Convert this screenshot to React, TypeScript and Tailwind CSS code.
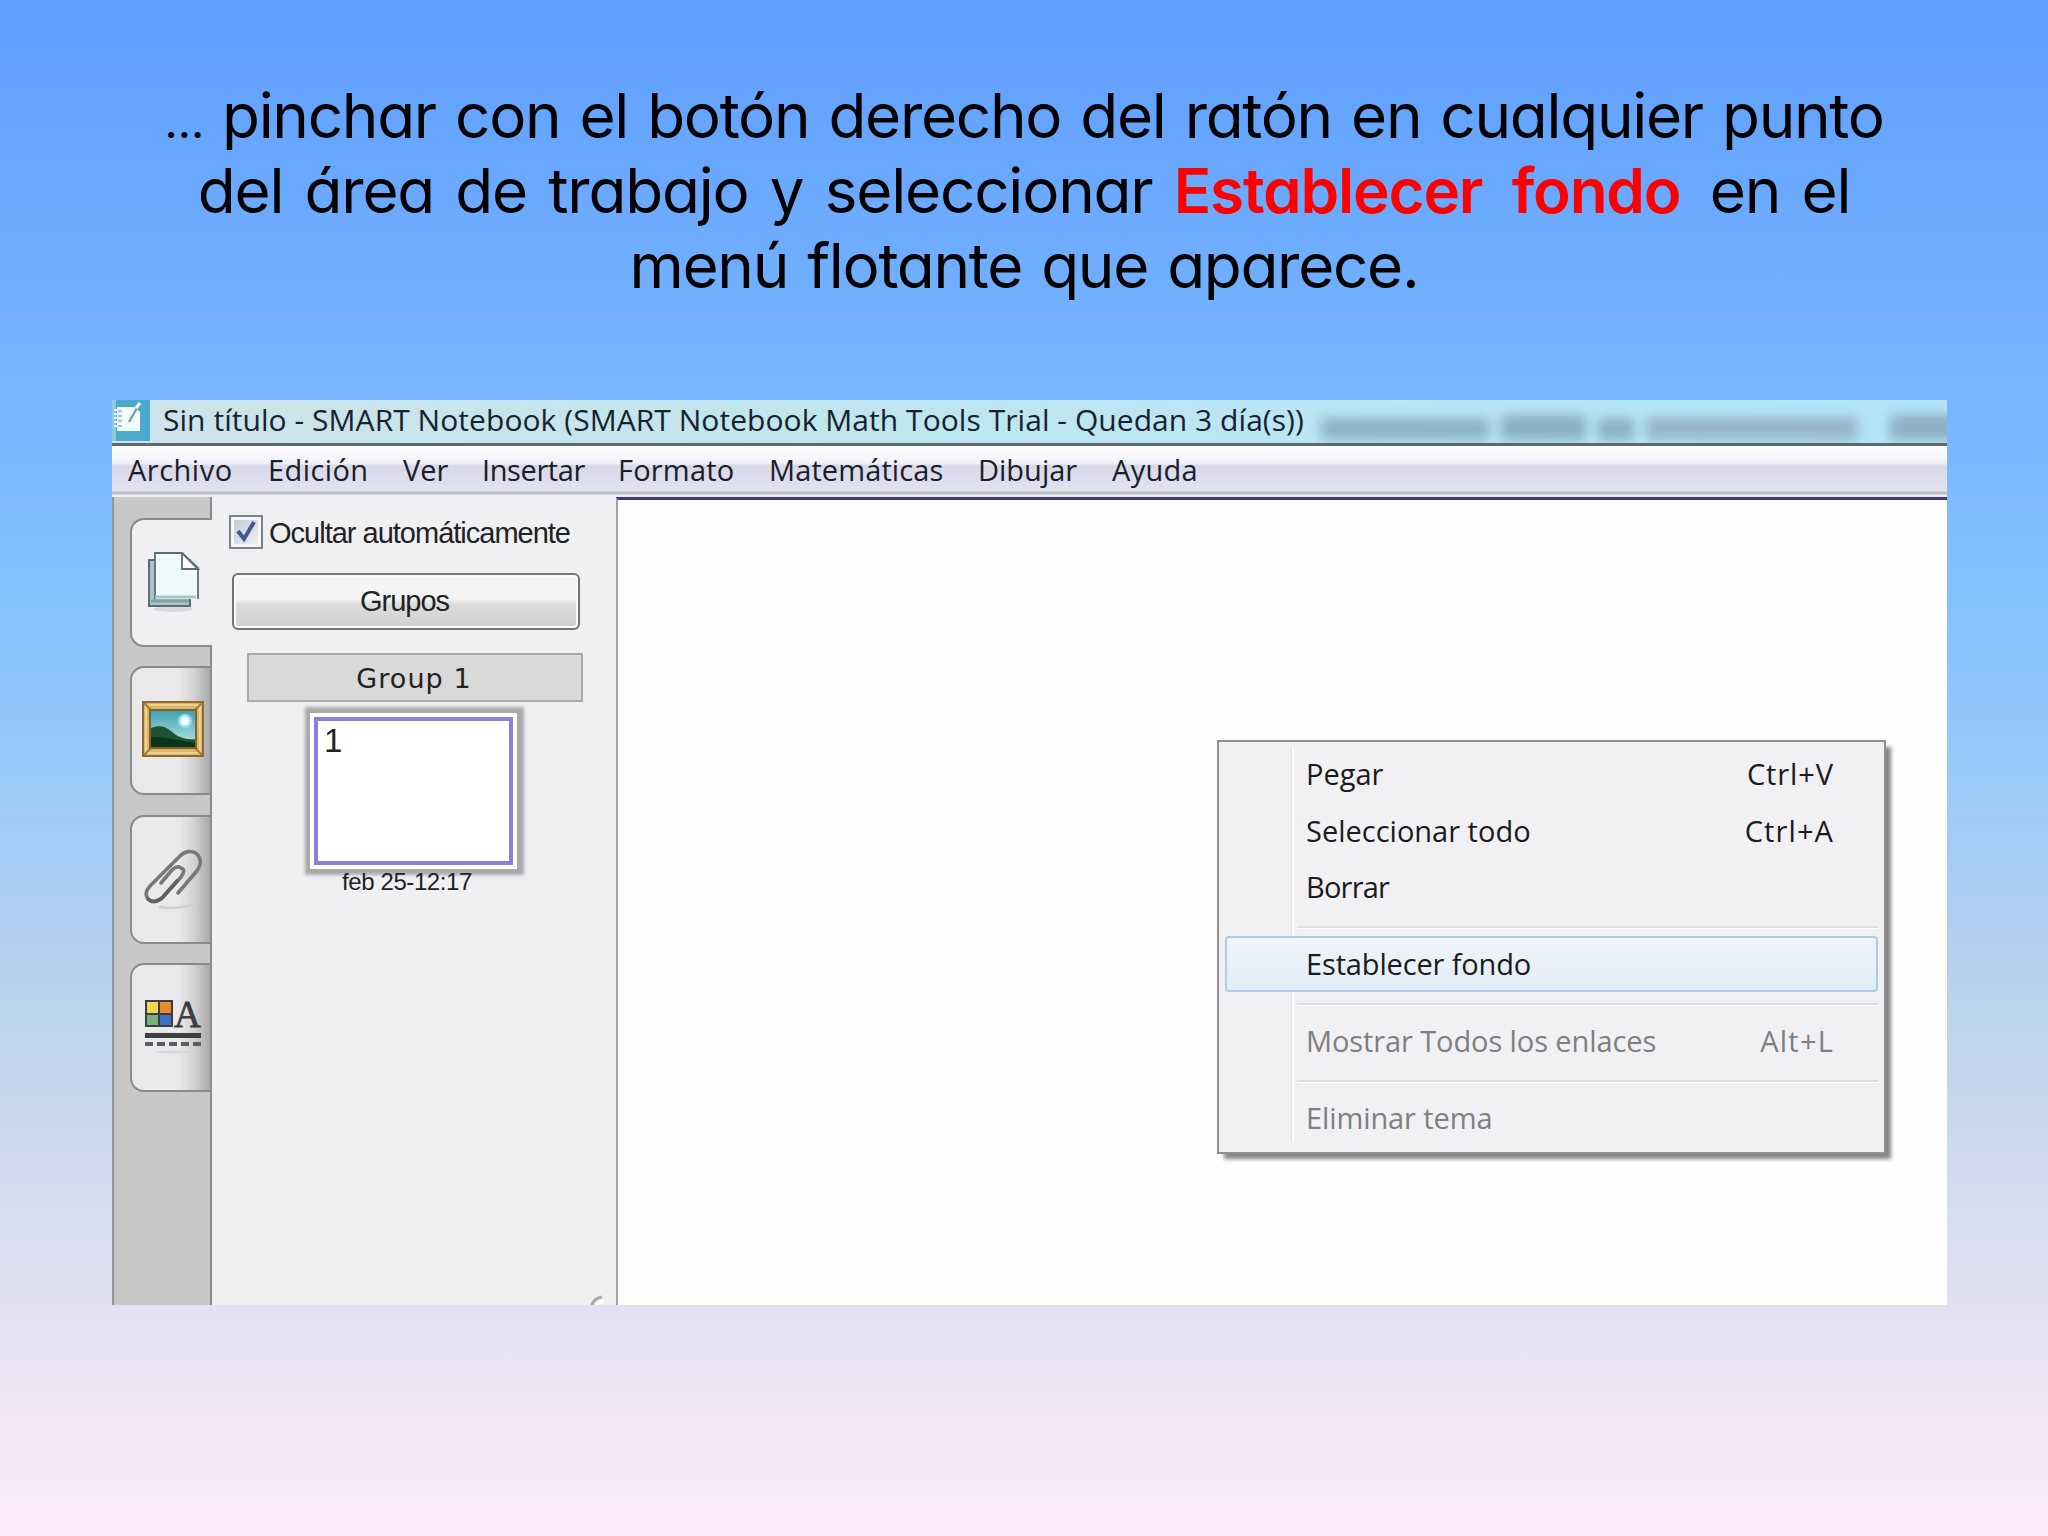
import clsx from 'clsx';

interface MenuEntry {
  label: string;
  shortcut?: string;
  disabled?: boolean;
  active?: boolean;
  tracking: string;
  shortcutTracking?: string;
}

const menuBar = [
  { label: 'Archivo', className: 'w-[140px] tracking-[0.5px]' },
  { label: 'Edición', className: 'w-[135px] tracking-[0.4px]' },
  { label: 'Ver', className: 'w-[79px]' },
  { label: 'Insertar', className: 'w-[136px] tracking-[-0.4px]' },
  { label: 'Formato', className: 'w-[151px] tracking-[0.2px]' },
  { label: 'Matemáticas', className: 'w-[209px] tracking-[0.1px]' },
  { label: 'Dibujar', className: 'w-[134px]' },
  { label: 'Ayuda', className: 'w-[120px] tracking-[0.3px]' },
];

const contextMenu: MenuEntry[][] = [
  [
    { label: 'Pegar', shortcut: 'Ctrl+V', tracking: 'tracking-[0px]', shortcutTracking: 'tracking-[0.9px]' },
    { label: 'Seleccionar todo', shortcut: 'Ctrl+A', tracking: 'tracking-[0px]', shortcutTracking: 'tracking-[1.1px]' },
    { label: 'Borrar', tracking: 'tracking-[-0.8px]' },
  ],
  [{ label: 'Establecer fondo', active: true, tracking: 'tracking-[-0.15px]' }],
  [
    {
      label: 'Mostrar Todos los enlaces',
      shortcut: 'Alt+L',
      disabled: true,
      tracking: 'tracking-[-0.1px]',
      shortcutTracking: 'tracking-[1.2px]',
    },
  ],
  [{ label: 'Eliminar tema', disabled: true, tracking: 'tracking-[-0.1px]' }],
];

function NotebookIcon() {
  return (
    <svg viewBox="0 0 38 41" className="h-[41px] w-[38px] shrink-0">
      <rect width="38" height="41" fill="#4ba9cb" />
      <rect x="0" width="4" height="41" fill="#8ccbdd" />
      <path d="M5 7h18l5 5v19H5z" fill="#f1f9fb" />
      <path d="M2 10h6M2 14h6M2 18h6M2 22h6M2 26h6" stroke="#e6f4f8" strokeWidth="2" />
      <path d="M6 11h4M6 16h4M6 21h4M6 26h4" stroke="#86b4c4" strokeWidth="1.4" />
      <path d="M17 22 25 8" stroke="#7e9aa3" strokeWidth="2.4" />
      <path d="m24 8 4-5" stroke="#ffffff" strokeWidth="3" />
    </svg>
  );
}

function PagesIcon() {
  return (
    <svg viewBox="0 0 54 62" className="h-[62px] w-[54px]">
      <ellipse cx="26" cy="57" rx="20" ry="3" fill="#d9dadb" />
      <path d="M2 8h41v46H2z" fill="#a9c3c8" stroke="#5d6e72" strokeWidth="2" />
      <path d="M4 49h38" stroke="#83a0a4" strokeWidth="3" />
      <path d="M8 1h27l16 15v31H8z" fill="#edfafc" />
      <path d="M8 47V1h27l16 15v31" fill="none" stroke="#626b6e" strokeWidth="1.8" />
      <path d="M8 45h41" stroke="#a7c6ca" strokeWidth="3" />
      <path d="M35 1v16h16z" fill="#fafcfc" stroke="#626b6e" strokeWidth="1.8" />
    </svg>
  );
}

function PictureIcon() {
  return (
    <svg viewBox="0 0 62 56" className="h-[56px] w-[62px]">
      <defs>
        <linearGradient id="sky" x1="0" y1="0" x2="0" y2="1">
          <stop offset="0" stopColor="#3fa0b6" />
          <stop offset="1" stopColor="#bfe9dd" />
        </linearGradient>
      </defs>
      <rect x="1" y="1" width="60" height="54" fill="#dcb566" stroke="#8c6a33" strokeWidth="2" />
      <rect x="4" y="4" width="54" height="48" fill="none" stroke="#ecd191" strokeWidth="2" />
      <path d="m2 2 8 8M60 2l-8 8M2 54l8-8M60 54l-8-8" stroke="#a37c3b" strokeWidth="2" />
      <rect x="8" y="9" width="46" height="38" fill="url(#sky)" stroke="#7c6330" strokeWidth="2" />
      <circle cx="43" cy="20" r="7" fill="#9ddcf0" />
      <circle cx="43" cy="20" r="4.5" fill="#f4fdff" />
      <path d="M9 27c8-3 14-2 20 3 6 6 15 9 24 8v8H9z" fill="#1d5232" />
      <path d="M9 36c12 0 26 3 44 6v4H9z" fill="#0b3318" />
    </svg>
  );
}

function ClipIcon() {
  return (
    <svg viewBox="0 0 60 62" className="h-[62px] w-[60px]" fill="none" strokeLinecap="round">
      <path d="M16 59c10 2 20 1 32-2" stroke="#cfcfcf" strokeWidth="2.5" />
      <path
        d="M34 45 52 24c5-6 6-13 1-18-5-4-12-3-17 2L7 37c-5 5-6 10-3 14 4 4 10 3 15-2l18-20c4-5 3-8 0-9-3-2-6-1-9 2L17 35"
        stroke="#77787a"
        strokeWidth="3.6"
      />
      <path d="M4 51c4 4 10 3 15-2l14-16" stroke="#5f6062" strokeWidth="3.6" />
    </svg>
  );
}

function PropertiesIcon() {
  return (
    <svg viewBox="0 0 58 56" className="h-[56px] w-[58px] overflow-visible">
      <rect x="1" y="1" width="28" height="27" fill="#3b3d42" />
      <rect x="3" y="3" width="11" height="11" fill="#f2d652" />
      <rect x="16" y="3" width="11" height="11" fill="#e88b2c" />
      <rect x="3" y="16" width="11" height="10" fill="#75b27b" />
      <rect x="16" y="16" width="11" height="10" fill="#3e6fc4" />
      <text
        x="30"
        y="28"
        fontSize="38"
        textLength="27"
        lengthAdjust="spacingAndGlyphs"
        fill="#3c3c44"
        stroke="#3c3c44"
        strokeWidth="0.8"
        className="font-['Liberation_Serif',serif]"
      >
        A
      </text>
      <rect x="1" y="34" width="56" height="5" fill="#3f3f3f" />
      <path d="M1 45h56" stroke="#5c5c5c" strokeWidth="4" strokeDasharray="8 4" />
      <ellipse cx="30" cy="53" rx="18" ry="1.5" fill="#d6d6d6" />
    </svg>
  );
}

const inactiveTab = 'bg-linear-to-r from-[#e9e9eb] from-60% via-[#d2d2d2] via-80% to-[#a9a9a9] border-r-2';

const sideTabs = [
  { id: 'pages', icon: <PagesIcon />, className: 'bg-[#f0f0f2] pl-[15px]' },
  { id: 'gallery', icon: <PictureIcon />, className: clsx(inactiveTab, 'pl-[10px] pb-1') },
  { id: 'attachments', icon: <ClipIcon />, className: clsx(inactiveTab, 'pl-[12px]') },
  { id: 'properties', icon: <PropertiesIcon />, className: clsx(inactiveTab, 'pl-[12px] pb-[2px]') },
];

function TitleBar() {
  return (
    <div className="flex h-[43px] items-start overflow-hidden bg-linear-to-r from-[#cfe2ea] via-[#bfe6ee] via-40% to-[#b3e4fb]">
      <NotebookIcon />
      <span className="ml-[13px] w-[1158px] shrink-0 whitespace-nowrap text-[30px] leading-[39px] tracking-[0.05px] text-[#16232e]">
        Sin título - SMART Notebook (SMART Notebook Math Tools Trial - Quedan 3 día(s))
      </span>
      {/* title of the window behind, seen through the glass */}
      <div className="flex h-full shrink-0 items-end gap-3 pb-[3px] opacity-75 blur-[6px]">
        <div className="h-[22px] w-[168px] bg-[#7fa3b5]" />
        <div className="h-[25px] w-[85px] bg-[#7b9db2]" />
        <div className="h-[22px] w-[36px] bg-[#7d9fb4]" />
        <div className="h-[23px] w-[212px] bg-[#8ba7b9]" />
        <div className="ml-5 h-[25px] w-[80px] bg-[#809db0]" />
      </div>
    </div>
  );
}

function MenuBar() {
  return (
    <nav className="flex h-[54px] border-t-3 border-[#5d6a72] bg-[linear-gradient(#ffffff_0px,#f1f1fa_17px,#d8d8e6_20px,#dedff3_38px,#e3e3e6_45px,#bfbfca_46px,#bfbfca_48px,#f0f0f4_49px)] pl-[16px] text-[29px] leading-[48px] text-[#1c1c2b]">
      {menuBar.map((item) => (
        <span key={item.label} className={clsx('shrink-0 whitespace-nowrap', item.className)}>
          {item.label}
        </span>
      ))}
    </nav>
  );
}

function SideTabs() {
  return (
    <div className="flex w-[100px] shrink-0 flex-col border-l-2 border-[#8f959b] bg-[#c8c8c8]">
      <div className="h-[21px] border-r-2 border-[#8a8a8a]" />
      {sideTabs.map((tab) => (
        <div key={tab.id} className="flex flex-col">
          <div
            className={clsx(
              'ml-[16px] flex h-[129px] items-center rounded-l-[14px] border-y-2 border-l-2 border-[#8a8a8a]',
              tab.className,
            )}
          >
            {tab.icon}
          </div>
          <div className="h-[19.4px] border-r-2 border-[#8a8a8a]" />
        </div>
      ))}
      <div className="flex-1 border-r-2 border-[#8a8a8a]" />
    </div>
  );
}

function PageSorter() {
  return (
    <div className="flex w-[404px] shrink-0 flex-col bg-[#f0f0f2] font-['Liberation_Sans',Arial,sans-serif] text-[#222]">
      <div className="mt-[18px] ml-[17px] flex h-[34px] items-center">
        <div className="flex size-[34px] items-center justify-center border-2 border-[#7d8288] bg-[#f6f7f8] p-[3px]">
          <svg viewBox="0 0 24 24" className="size-full bg-linear-to-br from-[#c3cbd6] to-[#eef1f5]" fill="none">
            <path d="m4 11 6 8L20 2" stroke="#44598a" strokeWidth="4" />
          </svg>
        </div>
        <span className="ml-[6px] pt-[3px] whitespace-nowrap text-[29px] tracking-[-1px]">Ocultar automáticamente</span>
      </div>
      <button className="mt-[24px] ml-[20px] flex h-[57px] w-[348px] items-center justify-center rounded-[6px] border-2 border-[#757575] bg-linear-to-b from-[#f4f4f4] from-45% via-[#dddddd] via-55% to-[#cfcfcf] pr-[3px] text-[29px] tracking-[-1px] shadow-[inset_0_0_0_2px_#fafafa]">
        Grupos
      </button>
      <div className="mt-[23px] ml-[35px] flex h-[49px] w-[336px] items-center justify-center border-2 border-[#a9a9a9] bg-[#d9d9d9] pt-[4px] pr-[2px] text-[27px] tracking-[1.1px] font-['DejaVu_Sans',Verdana,sans-serif]">
        Group 1
      </div>
      <div className="mt-[11px] ml-[98px] flex h-[156px] w-[207px] bg-white p-[4px] shadow-[1px_0_3px_6px_#a9a9a9]">
        <div className="flex-1 border-4 border-[#8b80dc] pl-[6px] text-[33px] leading-[40px]">1</div>
      </div>
      <span className="relative ml-[130px] whitespace-nowrap text-[24px] leading-[26px] tracking-[-0.4px]">feb 25-12:17</span>
      <svg viewBox="0 0 14 10" className="mt-auto ml-[378px] h-[10px] w-[14px]" fill="none">
        <path d="M2 10c1-4 4-7 10-8" stroke="#a8a8a8" strokeWidth="3" />
        <path d="M7 10c1-2 3-3 6-4" stroke="#ffffff" strokeWidth="3" />
      </svg>
    </div>
  );
}

function ContextMenu() {
  return (
    <div className="absolute top-[240px] left-[599px] h-[414px] w-[669px] border-2 border-[#8f8f91] bg-[#f1f0f2] px-[6px] pt-[4px] text-[29px] text-[#1b1b1b] shadow-[6px_6px_4px_-1px_#848484]">
      <div className="absolute top-[6px] left-[72px] h-[394px] w-[3px] border-l border-[#e0e0e2] bg-white" />
      {contextMenu.map((group, i) => (
        <div key={group[0].label} className="relative">
          {i > 0 && (
            <div className="flex h-[20.5px] items-center pt-[4px] pl-[72px]">
              <div className="h-[3px] w-full border-t-2 border-[#dfdfe1] bg-white" />
            </div>
          )}
          {group.map((item) => (
            <div
              key={item.label}
              className={clsx(
                'flex h-[56.4px] items-center justify-between rounded-[4px] border-2 pr-[42px] pl-[79px] whitespace-nowrap',
                item.active ? 'border-[#b0cbe3] bg-linear-to-b from-[#f0f4fa] to-[#e2edf8]' : 'border-transparent',
                item.disabled && 'text-[#7f7f81]',
              )}
            >
              <span className={item.tracking}>{item.label}</span>
              {item.shortcut && <span className={item.shortcutTracking}>{item.shortcut}</span>}
            </div>
          ))}
        </div>
      ))}
    </div>
  );
}

export default function App() {
  return (
    <main className="flex h-[1536px] w-[2048px] flex-col overflow-hidden bg-[linear-gradient(#5e9eff_0%,#85c2ff_40%,#c4d6eb_70%,#ffebfa_100%)]">
      <h1 className="flex h-[400px] flex-col items-center pt-[78px] text-[62px] leading-[75px] whitespace-pre text-black font-['Comic_Sans_MS','Inter',sans-serif] [font-feature-settings:'cv11']">
        <span className="tracking-[-1.3px] [word-spacing:3px]">
          <span className="text-[46px] leading-none">…</span> pinchar con el botón derecho del ratón en cualquier punto
        </span>
        <span className="tracking-[-1.2px] [word-spacing:5px]">
          del área de trabajo y seleccionar <b className="font-semibold text-[#ff0000] [word-spacing:15px]">Establecer fondo </b>en el
        </span>
        <span className="tracking-[-1.3px] [word-spacing:3px]">menú flotante que aparece.</span>
      </h1>
      <section className="ml-[112px] flex h-[905px] w-[1835px] flex-col overflow-hidden bg-white font-['Open_Sans','Segoe_UI',sans-serif]">
        <TitleBar />
        <MenuBar />
        <div className="flex min-h-0 flex-1">
          <SideTabs />
          <PageSorter />
          <div className="relative flex-1 border-t-3 border-l-2 border-t-[#45358a] border-l-[#a2a2a6] bg-[#fefefe]">
            <ContextMenu />
          </div>
        </div>
      </section>
    </main>
  );
}
